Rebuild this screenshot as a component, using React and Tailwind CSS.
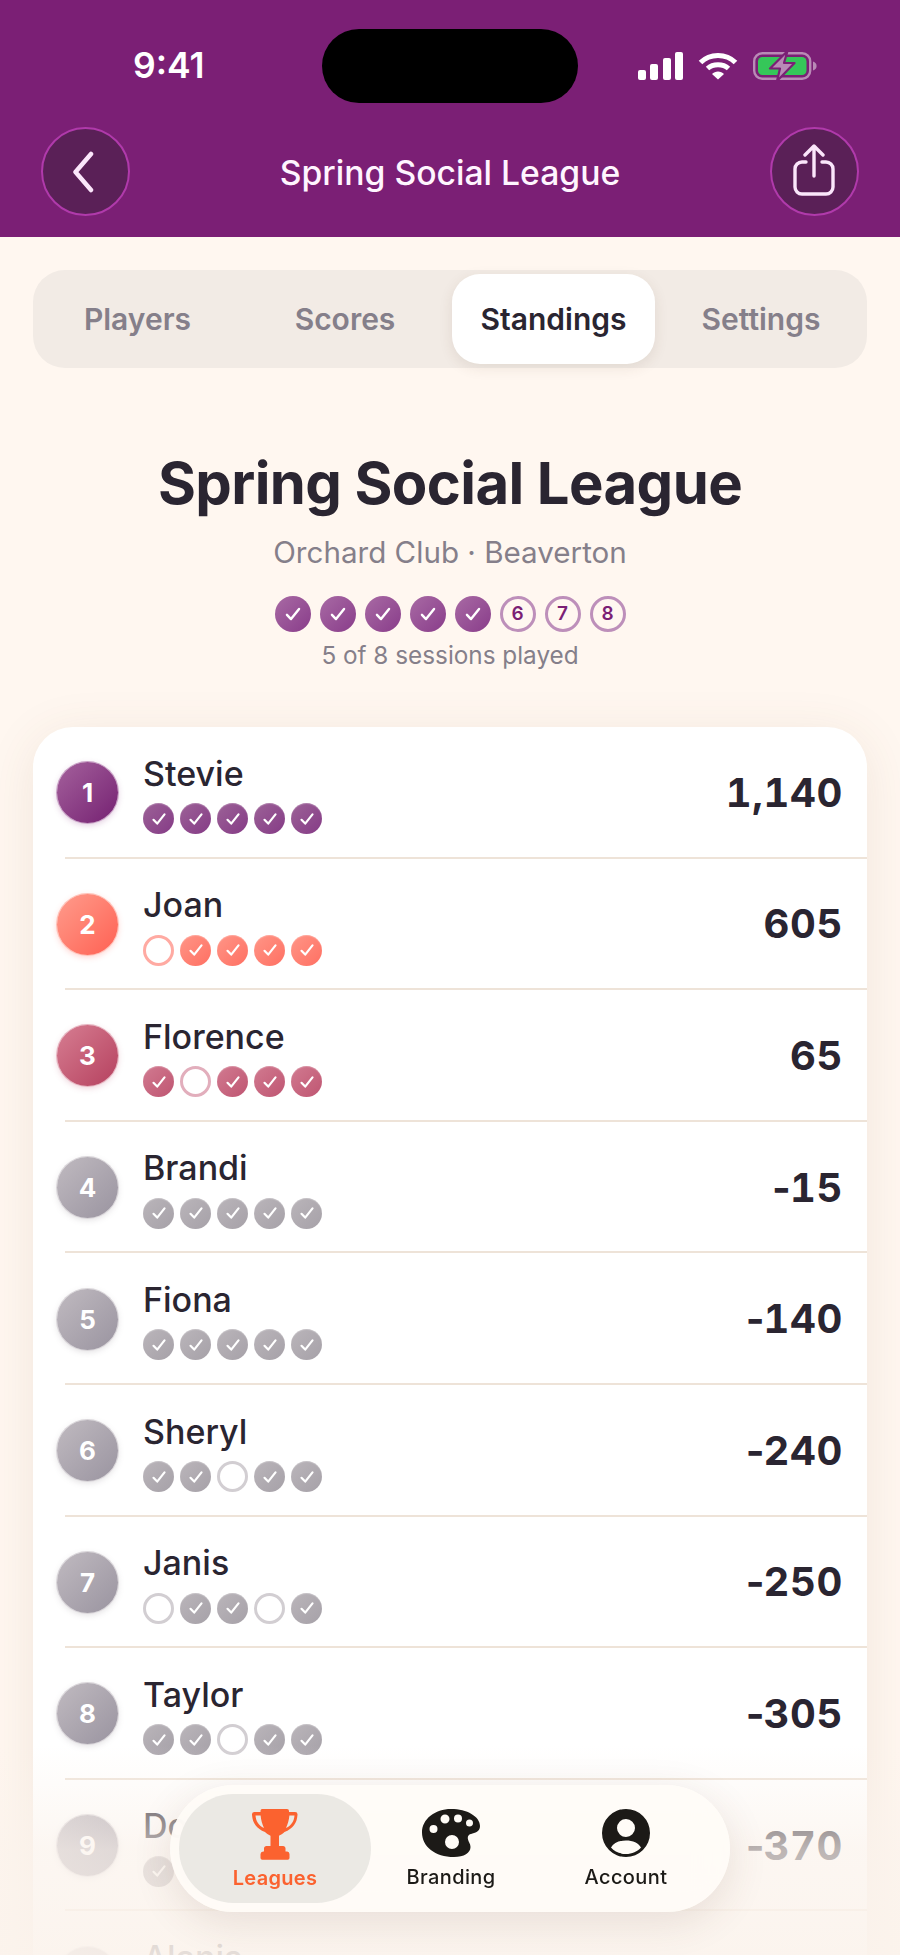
const PLAYERS = [
  { rank: 1, name: 'Stevie', score: '1,140', tone: 'plum', dots: [1, 1, 1, 1, 1] },
  { rank: 2, name: 'Joan', score: '605', tone: 'coral', dots: [0, 1, 1, 1, 1] },
  { rank: 3, name: 'Florence', score: '65', tone: 'rose', dots: [1, 0, 1, 1, 1] },
  { rank: 4, name: 'Brandi', score: '-15', tone: 'gray', dots: [1, 1, 1, 1, 1] },
  { rank: 5, name: 'Fiona', score: '-140', tone: 'gray', dots: [1, 1, 1, 1, 1] },
  { rank: 6, name: 'Sheryl', score: '-240', tone: 'gray', dots: [1, 1, 0, 1, 1] },
  { rank: 7, name: 'Janis', score: '-250', tone: 'gray', dots: [0, 1, 1, 0, 1] },
  { rank: 8, name: 'Taylor', score: '-305', tone: 'gray', dots: [1, 1, 0, 1, 1] },
  { rank: 9, name: 'Dorsey', score: '-370', tone: 'gray', dots: [1, 1, 1, 1, 1] },
  { rank: 10, name: 'Alanis', score: '-410', tone: 'gray', dots: [1, 1, 1, 1, 1] },
];

const TONES = {
  plum: {
    badge: 'bg-gradient-to-br from-[#a4609c] to-[#751f72] shadow-[0_0_0_1px_#c9a2c6,0_2px_6px_rgba(123,31,117,0.25)]',
    dot: 'bg-gradient-to-br from-[#9c6297] to-[#853a86] shadow-[inset_0_1px_1px_rgba(255,255,255,0.25)]',
    empty: 'border-[#cfa9cc]',
  },
  coral: {
    badge: 'bg-gradient-to-br from-[#ff9b8c] to-[#ff5f52] shadow-[0_0_0_1px_#ffc2b8,0_2px_6px_rgba(255,95,82,0.3)]',
    dot: 'bg-gradient-to-br from-[#ff9587] to-[#ff6f62] shadow-[inset_0_1px_1px_rgba(255,255,255,0.25)]',
    empty: 'border-[#ffaaa2]',
  },
  rose: {
    badge: 'bg-gradient-to-br from-[#d67d92] to-[#b5405f] shadow-[0_0_0_1px_#e7b5c1,0_2px_6px_rgba(181,64,95,0.25)]',
    dot: 'bg-gradient-to-br from-[#d17a90] to-[#bf5572] shadow-[inset_0_1px_1px_rgba(255,255,255,0.25)]',
    empty: 'border-[#e2aebc]',
  },
  gray: {
    badge: 'bg-gradient-to-br from-[#c0bac0] to-[#9a94a0] shadow-[0_0_0_1px_#dad6da,0_2px_6px_rgba(120,110,120,0.22)]',
    dot: 'bg-gradient-to-br from-[#bab5ba] to-[#a6a1a8] shadow-[inset_0_1px_1px_rgba(255,255,255,0.25)]',
    empty: 'border-[#d2ced2]',
  },
};

function Check({ size }) {
  return (
    <svg width={size} height={size} viewBox="0 0 20 20" fill="none" stroke="#fff" strokeWidth="2.2" strokeLinecap="round" strokeLinejoin="round">
      <path d="M4.5 10.8 8.2 14.6 15.5 5.4" />
    </svg>
  );
}

function StatusIcons() {
  return (
    <div className="flex items-center gap-[15px]">
      <svg width="45" height="28" viewBox="0 0 45 28" fill="#fff">
        <rect x="0" y="18" width="8" height="10" rx="2" />
        <rect x="12" y="12" width="8" height="16" rx="2" />
        <rect x="25" y="6" width="8" height="22" rx="2" />
        <rect x="37" y="0" width="8" height="28" rx="2" />
      </svg>
      <svg width="40" height="28" viewBox="0 0 40 28" fill="none" stroke="#fff" strokeWidth="5">
        <path d="M2.500 10.500C12 1 28 1 37.500 10.500" />
        <path d="M9.500 16.500C15 11.500 25 11.500 30.500 16.500" />
        <path d="M14 22 20 27.500 26 22C23 18.600 17 18.600 14 22Z" fill="#fff" stroke="none" />
      </svg>
      <svg width="64" height="30" viewBox="0 0 64 30" fill="none">
        <rect x="1.200" y="2.200" width="56" height="25.600" rx="8" stroke="#b98ab6" strokeWidth="2.400" />
        <rect x="5" y="6" width="48.500" height="18" rx="4.500" fill="#35c759" />
        <path d="M60 10.500c2.400.6 3.600 2.300 3.600 4.500s-1.200 3.900-3.600 4.500z" fill="#b98ab6" />
        <path d="M34.500 0 17 17.500h10L24 30l17.500-18h-10.500z" fill="#b98ab6" stroke="#7b1f75" strokeWidth="2.200" strokeLinejoin="round" />
      </svg>
    </div>
  );
}

function Header() {
  return (
    <header className="h-[237px] bg-[#7b1f75] px-[41px] flex flex-col">
      <div className="h-[127px] pt-[29px]">
        <div className="h-[74px] flex items-center">
          <span className="ml-[92px] w-[189px] text-[35.500px] leading-[42px] font-semibold text-white">9:41</span>
          <div className="w-[256px] h-[74px] rounded-[37px] bg-black" />
          <div className="ml-[60px]">
            <StatusIcons />
          </div>
        </div>
      </div>
      <div className="flex items-center justify-between">
        <button className="w-[89px] h-[89px] rounded-full bg-[#5a2057] border-2 border-[#b03aab] flex items-center justify-center">
          <svg width="32" height="42" viewBox="0 0 32 42" fill="none" stroke="#fbe6fb" strokeWidth="4.500" strokeLinecap="round" strokeLinejoin="round" className="mr-[2px]">
            <path d="M22 3 6.500 21 22 39" />
          </svg>
        </button>
        <h1 className="text-[33.700px] font-medium text-[#fff5ff] leading-[40px] mt-[2px]">Spring Social League</h1>
        <button className="w-[89px] h-[89px] rounded-full bg-[#5a2057] border-2 border-[#b03aab] flex items-center justify-center">
          <svg width="42" height="52" viewBox="0 0 42 52" fill="none" stroke="#fbe6fb" strokeWidth="3.400" strokeLinecap="round" strokeLinejoin="round" className="mb-[4px]">
            <path d="M21 32V3M12 11l9-9 9 9" />
            <path d="M13 18H9a7 7 0 0 0-7 7v18a7 7 0 0 0 7 7h24a7 7 0 0 0 7-7V25a7 7 0 0 0-7-7h-4" />
          </svg>
        </button>
      </div>
    </header>
  );
}

function Tabs() {
  const tabs = ['Players', 'Scores', 'Standings', 'Settings'];
  return (
    <div className="mx-[33px] mt-[33px] h-[98px] rounded-[32px] bg-[#f2ebe5] p-[4px] grid grid-cols-[201px_214px_203px_1fr]">
      {tabs.map((t) => (
        <div
          key={t}
          className={`flex items-center justify-center text-[30px] font-semibold ${t === 'Standings' ? 'rounded-[28px] bg-white text-[#2a2531] shadow-[0_4px_14px_rgba(90,60,40,0.1)]' : 'text-[#857f8a]'} ${t === 'Settings' ? 'pl-[4px]' : ''}`}
        >
          {t}
        </div>
      ))}
    </div>
  );
}

function Sessions() {
  return (
    <div className="flex justify-center gap-[9px] mt-[26px]">
      {[1, 2, 3, 4, 5, 6, 7, 8].map((n) =>
        n <= 5 ? (
          <div key={n} className="w-[36px] h-[36px] rounded-full bg-gradient-to-br from-[#a86aa4] to-[#893c8a] flex items-center justify-center">
            <Check size={22} />
          </div>
        ) : (
          <div key={n} className="w-[36px] h-[36px] rounded-full border-[3px] border-[#bd8fba] flex items-center justify-center text-[19px] font-semibold text-[#7b1f75]">
            {n}
          </div>
        ),
      )}
    </div>
  );
}

function Score({ value }) {
  const negative = value.startsWith('-');
  return (
    <div className="text-[40px] font-bold text-[#2a2531] tracking-[0.6px] tabular-nums">
      {negative && <span className="tracking-[-4.400px]">-</span>}
      {negative ? value.slice(1) : value}
    </div>
  );
}

function Row({ player, last }) {
  const tone = TONES[player.tone];
  return (
    <div className="relative h-[131.600px] px-[24px] flex items-center">
      <div className={`w-[61px] h-[61px] rounded-full flex items-center justify-center text-white text-[26px] font-bold shrink-0 ${tone.badge}`}>
        {player.rank}
      </div>
      <div className="ml-[25px] flex-1 mt-[2px]">
        <div className="text-[34px] leading-[42px] font-medium text-[#2a2531] mb-[8.500px] mt-[-1px]">{player.name}</div>
        <div className="flex gap-[6px]">
          {player.dots.map((on, i) =>
            on ? (
              <div key={i} className={`w-[31px] h-[31px] rounded-full flex items-center justify-center ${tone.dot}`}>
                <Check size={20} />
              </div>
            ) : (
              <div key={i} className={`w-[31px] h-[31px] rounded-full border-[3px] bg-white ${tone.empty}`} />
            ),
          )}
        </div>
      </div>
      <Score value={player.score} />
      {!last && <div className="absolute left-[32px] right-0 bottom-0 h-[2px] bg-[#eee3d8]" />}
    </div>
  );
}

function BottomNav() {
  return (
    <nav className="absolute left-[170px] top-[1785px] w-[560px] h-[127px] rounded-[64px] bg-[#fffcf7]/90 backdrop-blur-lg shadow-[0_10px_40px_rgba(90,60,40,0.12)] p-[9px] flex">
      <div className="w-[192px] rounded-[56px] bg-[#e9e7e2]/90 flex flex-col items-center">
        <svg width="46" height="52" viewBox="0 0 46 52" fill="#fb622f" className="mt-[14px]">
          <path d="M11 1h24a2 2 0 0 1 2 2v1h6a2.500 2.500 0 0 1 2.500 2.700c-.6 8.700-4.500 13.800-13 17.300-1.800 1.700-3.800 3-5.500 3.700V38h4c1.500 0 2.500 1 2.500 2.500v3h.8A2.700 2.700 0 0 1 37.500 46v4a1.800 1.800 0 0 1-1.800 1.800H10.300A1.800 1.800 0 0 1 8.500 50v-4a2.700 2.700 0 0 1 2.700-2.500h.8v-3C12 39 13 38 14.500 38h4V27.700c-1.700-.7-3.700-2-5.500-3.700C4.500 20.500.6 15.400 0 6.700A2.500 2.500 0 0 1 2.500 4h6V3a2 2 0 0 1 2.500-2Z" />
          <path d="M3.500 7.500c.5 5.700 2.800 9.700 8.500 12.500-1.800-3.700-3-8-3.400-12.500zM42.500 7.500c-.5 5.700-2.800 9.700-8.500 12.500 1.800-3.700 3-8 3.400-12.500z" fill="#ece9e4" />
        </svg>
        <span className="text-[20px] leading-[26px] font-semibold text-[#fb622f] mt-[5px] tracking-[0.3px]">Leagues</span>
      </div>
      <div className="w-[160px] flex flex-col items-center">
        <svg width="58" height="48" viewBox="0 0 58 48" className="mt-[15px]">
          <path
            fillRule="evenodd"
            fill="#1c1a17"
            d="M29 0c16 0 29 7.500 29 17 0 5.500-5 7-9 8-3 .8-3.500 3-3 5.500.5 2.800 2.500 4 2.500 7.500 0 6-6.500 10-16.500 10C13 48 0 37.500 0 23.500 0 10 13 0 29 0ZM23 5.500a4.500 4.500 0 1 0 0 9 4.500 4.500 0 0 0 0-9Zm13 0a4 4 0 1 0 0 8 4 4 0 0 0 0-8Zm11.500 5a3.500 3.500 0 1 0 0 7 3.500 3.500 0 0 0 0-7ZM11.500 16a4 4 0 1 0 0 8 4 4 0 0 0 0-8ZM30 26a7 7 0 1 0 0 14 7 7 0 0 0 0-14Z"
          />
        </svg>
        <span className="text-[20px] leading-[26px] font-medium text-[#1c1a17] mt-[7px] tracking-[0.4px]">Branding</span>
      </div>
      <div className="w-[190px] flex flex-col items-center">
        <svg width="48" height="48" viewBox="0 0 48 48" className="mt-[15px]">
          <path
            fillRule="evenodd"
            fill="#1c1a17"
            d="M24 0a24 24 0 1 1 0 48 24 24 0 0 1 0-48Zm0 10a9 9 0 1 0 0 18 9 9 0 0 0 0-18Zm0 21.500c-7 0-12.500 2.500-15 7C12.500 42.500 18 45 24 45s11.500-2.500 15-6.500c-2.500-4.500-8-7-15-7Z"
          />
        </svg>
        <span className="text-[20px] leading-[26px] font-medium text-[#1c1a17] mt-[7px] tracking-[0.4px]">Account</span>
      </div>
    </nav>
  );
}

export default function App() {
  return (
    <div className="relative w-[900px] h-[1955px] overflow-hidden bg-[#fff7f0] font-['Inter',sans-serif]">
      <Header />
      <Tabs />
      <div className="mt-[81px] text-center">
        <h2 className="text-[58px] leading-[68px] font-bold text-[#2a2531] tracking-[-0.6px]">Spring Social League</h2>
        <p className="mt-[17px] text-[29.600px] leading-[36px] text-[#857f8a]">Orchard Club · Beaverton</p>
        <Sessions />
        <p className="mt-[8px] text-[24.300px] leading-[30px] text-[#857f8a]">5 of 8 sessions played</p>
      </div>
      <div className="mt-[57px] mx-[33px] rounded-t-[40px] bg-white shadow-[0_8px_50px_rgba(120,80,50,0.1)]">
        {PLAYERS.map((p, i) => (
          <Row key={p.rank} player={p} last={i === PLAYERS.length - 1} />
        ))}
      </div>
      <div className="absolute left-0 right-0 bottom-0 h-[210px] bg-gradient-to-b from-[#fbf3ec]/0 via-[#fbf3ec]/70 to-[#fbf3ec]/90" />
      <BottomNav />
    </div>
  );
}
